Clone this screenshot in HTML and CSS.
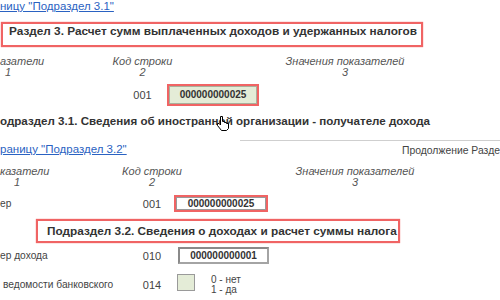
FILE: index.html
```html
<!DOCTYPE html>
<html lang="ru">
<head>
    <meta charset="UTF-8">
    <title>Раздел 3</title>
    <link rel="stylesheet" href="styles.css">
</head>
<body>

<div class="page">
    <section class="sheet">
        <a class="link" href="#">ницу "Подраздел 3.1"</a>
        <div class="title-box title-main">Раздел 3. Расчет сумм выплаченных доходов и удержанных налогов</div>
        <div class="heads">
            <div class="head head-name"><span>азатели</span><span class="num">1</span></div>
            <div class="head head-code"><span>Код строки</span><span>2</span></div>
            <div class="head head-val"><span>Значения показателей</span><span>3</span></div>
        </div>
        <div class="row">
            <div class="name"></div>
            <div class="code">001</div>
            <div class="field field-active">000000000025</div>
        </div>
        <h2 class="subhead">одраздел 3.1. Сведения об иностранной организации - получателе дохода
            <svg class="cursor" width="13" height="15" viewBox="0 0 13 15">
                <path d="M4.5 0.5h2v5h2v1h2v1h2v5l-2 2h-5l-4-5v-2h1.5l1.5 1.5z" fill="#fff" stroke="#000" stroke-width="1"/>
            </svg>
        </h2>
    </section>

    <div class="divider"></div>

    <section class="sheet sheet-next">
        <div class="topline">
            <a class="link" href="#">раницу "Подраздел 3.2"</a>
            <span class="continue">Продолжение Разде</span>
        </div>
        <div class="heads">
            <div class="head head-name"><span>казатели</span><span class="num">1</span></div>
            <div class="head head-code"><span>Код строки</span><span>2</span></div>
            <div class="head head-val"><span>Значения показателей</span><span>3</span></div>
        </div>
        <div class="row row-first">
            <div class="name">ер</div>
            <div class="code">001</div>
            <div class="field field-marked">000000000025</div>
        </div>
        <div class="title-box title-sub">Подраздел 3.2. Сведения о доходах и расчет суммы налога</div>
        <div class="row row-income">
            <div class="name">ер дохода</div>
            <div class="code">010</div>
            <div class="field field-plain">000000000001</div>
        </div>
        <div class="row row-flag">
            <div class="name name-indent">ведомости банковского</div>
            <div class="code">014</div>
            <div class="check"></div>
            <div class="legend"><span>0 - нет</span><span>1 - да</span></div>
        </div>
    </section>
</div>

</body>
</html>
```

FILE: styles.css
```css
body {
    margin: 0;
    font-family: 'Liberation Sans', Arial, sans-serif;
    color: #333;
    background: #fff;
}
.page {
    width: 500px;
    height: 300px;
    overflow: hidden;
    white-space: nowrap;
}
.link {
    display: block;
    height: 13px;
    font-size: 11.5px;
    line-height: 12px;
    color: #2a62c2;
    text-decoration: underline;
}
.title-box {
    font-size: 11.8px;
    font-weight: bold;
    line-height: 14px;
    color: #333;
    border: 2px solid #f06464;
    box-shadow: 0 0 1px #f06464;
    box-sizing: border-box;
}
.title-main {
    margin: 9px 0 0 1px;
    width: 422px;
    height: 25px;
    padding: 0 0 7px 6px;
}
.heads {
    display: flex;
    margin-top: 9px;
    font-size: 11px;
    font-style: italic;
    line-height: 11px;
    color: #555;
}
.head {
    display: flex;
    flex-direction: column;
    flex-shrink: 0;
}
.head-name {
    width: 118px;
}
.head-name .num {
    padding-left: 5px;
}
.head-code {
    width: 49px;
    align-items: center;
}
.head-val {
    width: 356px;
    align-items: center;
}
.row {
    display: flex;
    align-items: center;
    margin-top: 6px;
}
.name {
    width: 118px;
    flex-shrink: 0;
    font-size: 10.2px;
    color: #444;
}
.code {
    width: 49px;
    flex-shrink: 0;
    text-align: center;
    font-size: 11px;
    color: #444;
}
.field {
    box-sizing: border-box;
    font-size: 10px;
    font-weight: bold;
    text-align: center;
    color: #333;
}
.field-active {
    width: 92px;
    height: 22px;
    line-height: 18px;
    background: #e4ecd7;
    border: 2px solid #f06464;
    box-shadow: inset 0 0 0 1px #a8b09c;
}
.subhead {
    position: relative;
    margin: 8px 0 0;
    font-size: 11.6px;
    line-height: 14px;
    color: #333;
}
.cursor {
    position: absolute;
    left: 216px;
    top: 2px;
}
.divider {
    margin: 12px 0 0 240px;
    height: 1px;
    background: #cfcfcf;
}

/* second sheet sits ~10px further right */
.topline {
    display: flex;
    justify-content: space-between;
    margin-top: 2px;
}
.continue {
    padding-top: 2px;
    font-size: 10.4px;
    line-height: 12px;
    color: #444;
}
.sheet-next .heads {
    margin-top: 9px;
}
.sheet-next .head-name,
.sheet-next .name {
    width: 128px;
}
.sheet-next .head-name .num {
    padding-left: 14px;
}
.sheet-next .head-code,
.sheet-next .code {
    width: 48px;
}
.sheet-next .head-val {
    width: 358px;
}
.row-first {
    margin-top: 7px;
}
.field-marked {
    margin-left: -2px;
    width: 94px;
    height: 17px;
    line-height: 13px;
    background: #fff;
    border: 2px solid #f06464;
    box-shadow: inset 0 0 0 1px #9a9a9a;
}
.title-sub {
    margin: 7px 0 0 36px;
    width: 364px;
    height: 24px;
    padding: 2px 0 2px 9px;
    line-height: 16px;
}
.row-income {
    margin-top: 4px;
}
.field-plain {
    margin-left: 2px;
    width: 91px;
    height: 17px;
    line-height: 13px;
    background: #fff;
    border: 2px solid #a4a4a4;
    border-top-color: #8a8a8a;
    border-left-color: #8a8a8a;
}
.row-flag {
    margin-top: 10px;
    align-items: flex-start;
}
.row-flag .name,
.row-flag .code {
    align-self: center;
}
.name-indent {
    box-sizing: border-box;
    padding-left: 3px;
}
.check {
    margin-left: 1px;
    width: 18px;
    height: 17px;
    box-sizing: border-box;
    background: #e4ecd7;
    border: 1px solid #9a9a9a;
}
.legend {
    display: flex;
    flex-direction: column;
    margin: 1px 0 0 16px;
    font-size: 10px;
    line-height: 10px;
    color: #444;
}
```
